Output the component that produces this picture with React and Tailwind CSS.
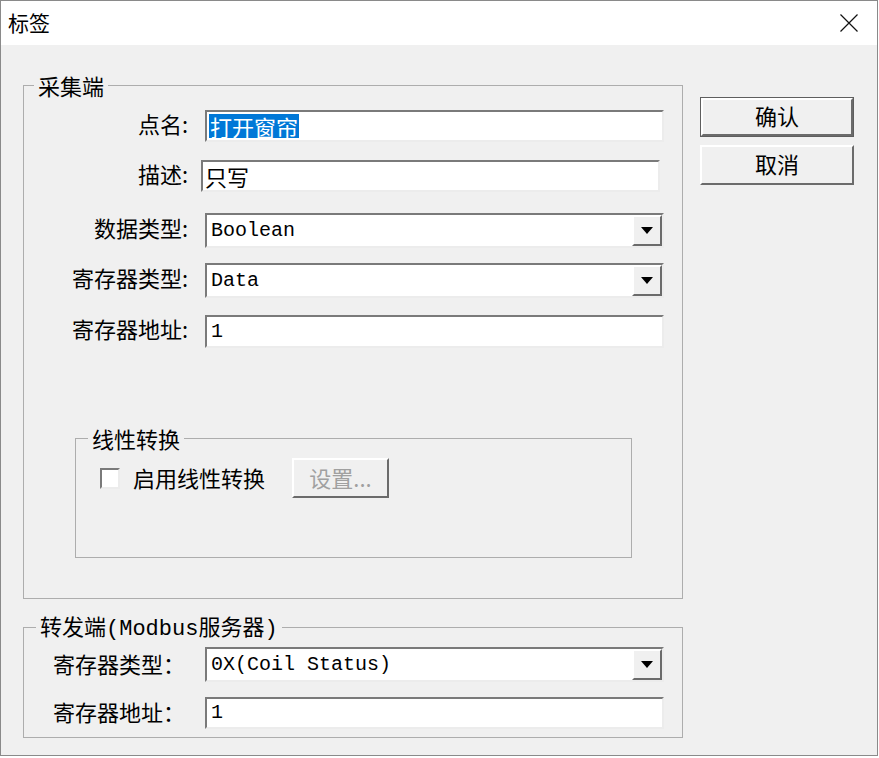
import React from 'react'

const cjk = "font-['Noto_Sans_CJK_SC',sans-serif]"
const mono = "font-['Liberation_Mono','Noto_Sans_CJK_SC',monospace]"
const sunken =
  'border-2 border-t-[#7a7a7a] border-l-[#7a7a7a] border-r-[#ececec] border-b-[#ececec] bg-white'
const raised =
  'border-2 border-t-white border-l-white border-r-[#6b6b6b] border-b-[#6b6b6b] bg-[#f0f0f0]'

const TextBox = ({ children, className = '' }) => (
  <div className={`h-[32px] w-[459px] flex items-center ${sunken} ${className}`}>{children}</div>
)

const Combo = ({ value }) => (
  <div className={`h-[35px] w-[459px] flex ${sunken}`}>
    <div className={`flex-1 flex items-center pl-[4px] text-[20px] text-black ${mono}`}>{value}</div>
    <div className={`w-[30px] h-full flex items-center justify-center ${raised}`}>
      <svg width="12" height="7" viewBox="0 0 12 7">
        <path d="M0 0H12L6 7Z" fill="#000" />
      </svg>
    </div>
  </div>
)

const Row = ({ label, mt, children }) => (
  <div className={`flex items-center ${mt}`}>
    <div className={`w-[164px] pb-[7px] text-right text-[22px] leading-[24px] text-black ${cjk}`}>{label}</div>
    {children}
  </div>
)

const Row2 = ({ label, mt, children }) => (
  <div className={`flex items-center ${mt}`}>
    <div className={`ml-[29px] w-[152px] pb-[4px] text-[22px] leading-[24px] text-black ${cjk}`}>{label}</div>
    {children}
  </div>
)

const Legend = ({ children, ml = 'ml-[10px]' }) => (
  <legend className={`${ml} px-[4px] text-[22px] leading-[22px] text-black ${cjk}`}>{children}</legend>
)

export default function App() {
  return (
    <div className="w-[879px] h-[758px] bg-white">
      <div className="w-[878px] h-[756px] border border-[#8a8a8a] flex flex-col">
        {/* title bar */}
        <div className="h-[44px] bg-white flex items-center justify-between pl-[7px] pr-[19px]">
          <span className={`text-[21px] text-black ${cjk}`}>标签</span>
          <svg width="18" height="18" viewBox="0 0 18 18">
            <path d="M0.5 0.5L17.5 17.5M17.5 0.5L0.5 17.5" stroke="#111" strokeWidth="1.2" />
          </svg>
        </div>

        <div className="flex-1 bg-[#f0f0f0] flex">
          <div className="ml-[22px] w-[660px] flex flex-col">
            {/* 采集端 */}
            <fieldset className="mt-[29px] h-[525px] border border-[#adadad]">
              <Legend ml="ml-[10px]">采集端</Legend>
              <Row label="点名:" mt="mt-[14px]">
                <TextBox className="ml-[17px]">
                  <span className={`ml-[2px] px-[1px] bg-[#0078d7] text-white text-[22px] leading-[24px] ${cjk}`}>
                    打开窗帘
                  </span>
                </TextBox>
              </Row>
              <Row label="描述:" mt="mt-[18px]">
                <TextBox className="ml-[13px]">
                  <span className={`ml-[2px] text-[22px] leading-[24px] text-black ${cjk}`}>只写</span>
                </TextBox>
              </Row>
              <Row label="数据类型:" mt="mt-[21px]">
                <div className="ml-[17px]">
                  <Combo value="Boolean" />
                </div>
              </Row>
              <Row label="寄存器类型:" mt="mt-[15px]">
                <div className="ml-[17px]">
                  <Combo value="Data" />
                </div>
              </Row>
              <Row label="寄存器地址:" mt="mt-[17px]">
                <TextBox className="ml-[17px] h-[33px]">
                  <span className={`ml-[4px] text-[20px] text-black ${mono}`}>1</span>
                </TextBox>
              </Row>

              {/* 线性转换 */}
              <fieldset className="ml-[51px] mt-[79px] w-[557px] h-[131px] border border-[#adadad]">
                <Legend ml="ml-[12px]">线性转换</Legend>
                <div className="mt-[9px] h-[40px] flex items-center">
                  <div className={`ml-[24px] w-[20px] h-[21px] ${sunken}`} />
                  <span className={`ml-[13px] pb-[2px] text-[22px] leading-[24px] text-black ${cjk}`}>启用线性转换</span>
                  <div
                    className={`ml-[27px] w-[97px] h-[40px] pb-[2px] flex items-center justify-center text-[22px] text-[#a0a0a0] ${cjk} ${raised}`}
                  >
                    设置...
                  </div>
                </div>
              </fieldset>
            </fieldset>

            {/* 转发端 */}
            <fieldset className="mt-[15px] h-[124px] border border-[#adadad]">
              <Legend ml="ml-[12px]">
                转发端<span className={mono}>(Modbus</span>服务器<span className={mono}>)</span>
              </Legend>
              <Row2 label="寄存器类型：" mt="mt-[6px]">
                <Combo value="0X(Coil Status)" />
              </Row2>
              <Row2 label="寄存器地址：" mt="mt-[15px]">
                <TextBox>
                  <span className={`ml-[4px] text-[20px] text-black ${mono}`}>1</span>
                </TextBox>
              </Row2>
            </fieldset>
          </div>

          {/* buttons */}
          <div className="ml-[17px] mt-[52px] w-[154px] flex flex-col gap-[8px]">
            <div className="h-[40px] border border-[#5e5e5e]">
              <div className={`h-full pb-[4px] flex items-center justify-center text-[22px] text-black ${cjk} ${raised}`}>
                确认
              </div>
            </div>
            <div className={`h-[40px] pb-[4px] flex items-center justify-center text-[22px] text-black ${cjk} ${raised}`}>
              取消
            </div>
          </div>
        </div>
      </div>
    </div>
  )
}
